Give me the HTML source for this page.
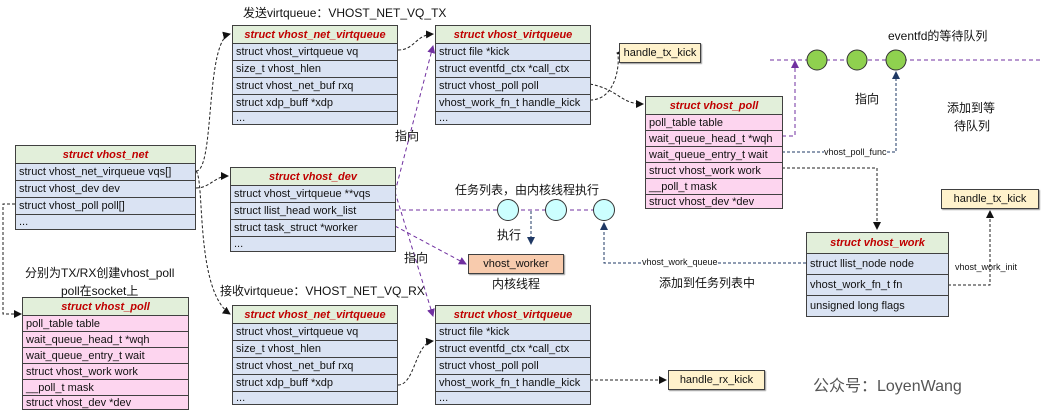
<!DOCTYPE html>
<html><head><meta charset="utf-8"><style>
*{margin:0;padding:0;box-sizing:border-box}
body{width:1045px;height:417px;background:#fff;position:relative;overflow:hidden;font-family:"Liberation Sans","Noto Sans CJK SC",sans-serif;font-size:11px;color:#111}
.b{position:absolute;border:1px solid #404040;background:#dae3f3}
.b div{border-top:1px solid #404040;padding-left:3px;white-space:nowrap;overflow:hidden;display:flex;align-items:center}
.b div.t{border-top:none;background:#e2efda;color:#c00000;font-weight:bold;font-style:italic;justify-content:center;padding-left:0}
.p{background:#fdd5ef}
.y{position:absolute;background:#fff2cc;border:1px solid #404040;box-shadow:1px 1px 1px #999;display:flex;align-items:center;justify-content:center;font-size:11px}
.l{position:absolute;white-space:nowrap}
svg{position:absolute;left:0;top:0}
</style></head><body>
<svg width="1045" height="417">
<defs>
<marker id="a" markerWidth="8" markerHeight="8" refX="7" refY="4" orient="auto" markerUnits="userSpaceOnUse"><path d="M0,0 L8,4 L0,8z" fill="#111"/></marker>
<marker id="ap" markerWidth="8" markerHeight="8" refX="7" refY="4" orient="auto" markerUnits="userSpaceOnUse"><path d="M0,0 L8,4 L0,8z" fill="#7030a0"/></marker>
<marker id="an" markerWidth="8" markerHeight="8" refX="7" refY="4" orient="auto" markerUnits="userSpaceOnUse"><path d="M0,0 L8,4 L0,8z" fill="#1f3864"/></marker>
</defs>
<g fill="none" stroke="#222" stroke-dasharray="3,2" stroke-width="1">
<path d="M196,171 C215,171 205,40 230,34" marker-end="url(#a)"/>
<path d="M196,171 C205,180 195,290 230,314" marker-end="url(#a)"/>
<path d="M196,188 C210,188 215,176 228,176" marker-end="url(#a)"/>
<path d="M15,204 L3,204 L3,314 L21,314" marker-end="url(#a)"/>
<path d="M398,50 C415,50 415,35 433,34" marker-end="url(#a)"/>
<path d="M398,385 C415,385 415,343 433,341" marker-end="url(#a)"/>
<path d="M590,100 C620,100 620,53 617,53" marker-end="url(#a)"/>
<path d="M590,84 C620,90 620,104 643,104" marker-end="url(#a)"/>
<path d="M590,380 L666,380" marker-end="url(#a)"/>
<path d="M782,168 L877,168 L877,229" marker-end="url(#a)"/>
<path d="M948,285 L990,285 L990,211" marker-end="url(#a)"/>
</g>
<g fill="none" stroke="#1f3864" stroke-dasharray="3,2">
<path d="M806,263 L604,263 L604,223" marker-end="url(#an)"/>
<path d="M782,152 L896,152 L896,72" marker-end="url(#an)"/>
<path d="M531,211 L531,244" marker-end="url(#an)"/>
</g>
<g fill="none" stroke="#7030a0" stroke-dasharray="4,3">
<path d="M395,192 L433,46" marker-end="url(#ap)"/>
<path d="M395,192 L433,316" marker-end="url(#ap)"/>
<path d="M395,226 L466,264" marker-end="url(#ap)"/>
<path d="M395,210 L613,210"/>
<path d="M782,136 L795,136 L795,61" marker-end="url(#ap)"/>
<path d="M770,60 L1040,60"/>
</g>
<g stroke="#333" stroke-width="1">
<circle cx="508" cy="210" r="10.5" fill="#ccffff"/><circle cx="556" cy="210" r="10.5" fill="#ccffff"/><circle cx="604" cy="210" r="10.5" fill="#ccffff"/>
<circle cx="817" cy="60" r="10" fill="#8fd14f"/><circle cx="857" cy="60" r="10" fill="#8fd14f"/><circle cx="896" cy="60" r="10" fill="#8fd14f"/>
</g>
</svg>

<div class="b" style="left:15px;top:145px;width:181px;height:85px">
<div class="t" style="height:17px">struct vhost_net</div><div style="height:17px">struct vhost_net_virqueue vqs[]</div><div style="height:17px">struct vhost_dev dev</div><div style="height:17px">struct vhost_poll poll[]</div><div style="height:15px">...</div></div>

<div class="b" style="left:232px;top:25px;width:166px;height:100px">
<div class="t" style="height:17px">struct vhost_net_virtqueue</div><div style="height:17px">struct vhost_virtqueue vq</div><div style="height:17px">size_t vhost_hlen</div><div style="height:17px">struct vhost_net_buf rxq</div><div style="height:17px">struct xdp_buff *xdp</div><div style="height:13px">...</div></div>

<div class="b" style="left:435px;top:25px;width:156px;height:100px">
<div class="t" style="height:17px">struct vhost_virtqueue</div><div style="height:17px">struct file *kick</div><div style="height:17px">struct eventfd_ctx *call_ctx</div><div style="height:17px">struct vhost_poll poll</div><div style="height:17px">vhost_work_fn_t handle_kick</div><div style="height:13px">...</div></div>

<div class="b" style="left:230px;top:167px;width:166px;height:85px">
<div class="t" style="height:17px">struct vhost_dev</div><div style="height:17px">struct vhost_virtqueue **vqs</div><div style="height:17px">struct llist_head work_list</div><div style="height:17px">struct task_struct *worker</div><div style="height:15px">...</div></div>

<div class="b p" style="left:645px;top:96px;width:138px;height:113px">
<div class="t" style="height:17px">struct vhost_poll</div><div style="height:16px">poll_table table</div><div style="height:16px">wait_queue_head_t *wqh</div><div style="height:16px">wait_queue_entry_t wait</div><div style="height:16px">struct vhost_work work</div><div style="height:16px">__poll_t mask</div><div style="height:14px">struct vhost_dev *dev</div></div>

<div class="b p" style="left:22px;top:297px;width:167px;height:113px">
<div class="t" style="height:17px">struct vhost_poll</div><div style="height:16px">poll_table table</div><div style="height:16px">wait_queue_head_t *wqh</div><div style="height:16px">wait_queue_entry_t wait</div><div style="height:16px">struct vhost_work work</div><div style="height:16px">__poll_t mask</div><div style="height:14px">struct vhost_dev *dev</div></div>

<div class="b" style="left:232px;top:305px;width:166px;height:100px">
<div class="t" style="height:17px">struct vhost_net_virtqueue</div><div style="height:17px">struct vhost_virtqueue vq</div><div style="height:17px">size_t vhost_hlen</div><div style="height:17px">struct vhost_net_buf rxq</div><div style="height:17px">struct xdp_buff *xdp</div><div style="height:13px">...</div></div>

<div class="b" style="left:435px;top:305px;width:156px;height:100px">
<div class="t" style="height:17px">struct vhost_virtqueue</div><div style="height:17px">struct file *kick</div><div style="height:17px">struct eventfd_ctx *call_ctx</div><div style="height:17px">struct vhost_poll poll</div><div style="height:17px">vhost_work_fn_t handle_kick</div><div style="height:13px">...</div></div>

<div class="b" style="left:806px;top:232px;width:143px;height:85px">
<div class="t" style="height:20px">struct vhost_work</div><div style="height:21px">struct llist_node node</div><div style="height:21px">vhost_work_fn_t fn</div><div style="height:21px">unsigned long flags</div></div>

<div class="y" style="left:619px;top:43px;width:82px;height:20px">handle_tx_kick</div>
<div class="y" style="left:941px;top:189px;width:98px;height:20px">handle_tx_kick</div>
<div class="y" style="left:668px;top:370px;width:97px;height:20px">handle_rx_kick</div>
<div class="y" style="left:468px;top:254px;width:96px;height:20px;background:#f8cbad">vhost_worker</div>

<div class="l" style="left:243px;top:4px;font-size:12px">发送virtqueue：VHOST_NET_VQ_TX</div>
<div class="l" style="left:220px;top:282px;font-size:12px">接收virtqueue：VHOST_NET_VQ_RX</div>
<div class="l" style="left:25px;top:264px;font-size:12px">分别为TX/RX创建vhost_poll</div>
<div class="l" style="left:61px;top:282px;font-size:12px">poll在socket上</div>
<div class="l" style="left:395px;top:127px;font-size:12px">指向</div>
<div class="l" style="left:404px;top:249px;font-size:12px">指向</div>
<div class="l" style="left:455px;top:181px;font-size:12px">任务列表，由内核线程执行</div>
<div class="l" style="left:497px;top:226px;font-size:12px">执行</div>
<div class="l" style="left:492px;top:275px;font-size:12px">内核线程</div>
<div class="l" style="left:855px;top:90px;font-size:12px">指向</div>
<div class="l" style="left:888px;top:27px;font-size:12px">eventfd的等待队列</div>
<div class="l" style="left:947px;top:99px;font-size:12px">添加到等</div>
<div class="l" style="left:954px;top:117px;font-size:12px">待队列</div>
<div class="l" style="left:824px;top:147px;font-size:9px;background:#fff">vhost_poll_func</div>
<div class="l" style="left:642px;top:257px;font-size:9px;background:#fff">vhost_work_queue</div>
<div class="l" style="left:659px;top:274px;font-size:12px">添加到任务列表中</div>
<div class="l" style="left:955px;top:262px;font-size:9px">vhost_work_init</div>
<div class="l" style="left:813px;top:372px;font-size:16px;color:#555">公众号：LoyenWang</div>
</body></html>
